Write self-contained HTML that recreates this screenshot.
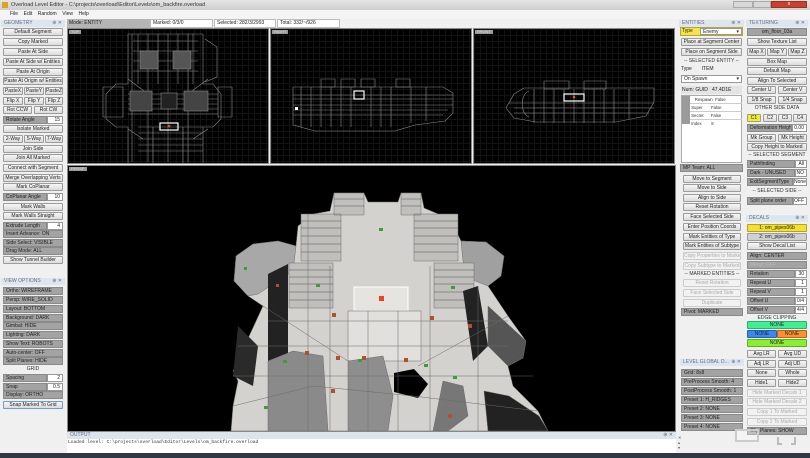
<!DOCTYPE html><html><head><style>
*{margin:0;padding:0;box-sizing:border-box}
body{width:810px;height:458px;overflow:hidden;background:#f0f0f0;font:5px/7px "Liberation Sans",sans-serif;color:#222;position:relative}
div{position:absolute}
.b{height:8px;background:linear-gradient(#f6f6f6,#dcdcdc);border:1px solid #9c9c9c;border-radius:1px;text-align:center;line-height:6px;white-space:nowrap;overflow:hidden}
.d{color:#aaa;background:#f2f2f2;border-color:#ccc}
.g{height:8px;background:#a3a3a3;border:1px solid #8a8a8a;padding-left:2px;line-height:6px;white-space:nowrap;overflow:hidden}
.i{height:8px;background:#fff;border:1px solid #999;text-align:right;padding-right:2px;line-height:6px}
.t{text-align:center;line-height:6px;color:#333}
.h{height:7px;background:#dde5ee;color:#61708a;padding-left:3px;line-height:7px}
.h span{position:absolute;right:3px;top:0}
.vp{background-color:#000;background-image:linear-gradient(#121212 1px,transparent 1px),linear-gradient(90deg,#121212 1px,transparent 1px);background-size:6px 6px;border:1px solid #888;overflow:hidden}
.lab{left:1px;top:1px;background:#9a9a9a;color:#ddd;font-size:4px;line-height:4px;padding:0 2px}
</style></head><body>
<div style="left:0;top:0;width:810px;height:10px;background:linear-gradient(#e4e4e4,#cfcfcf)"></div>
<div style="left:2px;top:2px;width:6px;height:6px;background:#e0a020"></div>
<div style="left:11px;top:1px;line-height:8px;font-size:5.5px;color:#333">Overload Level Editor - C:\projects\overload\Editor\Levels\om_backfire.overload</div>
<div style="left:733px;top:1px;width:20px;height:7px;background:#d8d8d8;border:1px solid #aaa"></div>
<div style="left:753px;top:1px;width:18px;height:7px;background:#d8d8d8;border:1px solid #aaa"></div>
<div style="left:771px;top:1px;width:36px;height:7px;background:#c84030;border:1px solid #a03020;color:#fff;text-align:center;line-height:5px">x</div>
<div style="left:0;top:10px;width:810px;height:9px;background:#f4f4f4"></div>
<div style="left:10px;top:11px;line-height:7px;font-size:5px">File&nbsp;&nbsp;&nbsp;&nbsp;Edit&nbsp;&nbsp;&nbsp;&nbsp;Random&nbsp;&nbsp;&nbsp;&nbsp;View&nbsp;&nbsp;&nbsp;&nbsp;Help</div>
<div style="left:67px;top:19px;width:83px;height:9px;background:#b4b4b4;padding-left:2px;line-height:9px">Mode: ENTITY</div>
<div style="left:150px;top:19px;width:63px;height:9px;background:#fff;border:1px solid #bbb;padding-left:2px;line-height:7px">Marked: 0/3/0</div>
<div style="left:214px;top:19px;width:62px;height:9px;background:#fff;border:1px solid #bbb;padding-left:2px;line-height:7px">Selected: 282/3/2993</div>
<div style="left:277px;top:19px;width:63px;height:9px;background:#fff;border:1px solid #bbb;padding-left:2px;line-height:7px">Total: 332/~/926</div>

<div class="h" style="left:1px;top:20px;width:64px">GEOMETRY<span>⊕ ✕</span></div>
<div class="b" style="left:3px;top:28px;width:60px">Default Segment</div>
<div class="b" style="left:3px;top:38px;width:60px">Copy Marked</div>
<div class="b" style="left:3px;top:48px;width:60px">Paste At Side</div>
<div class="b" style="left:3px;top:58px;width:60px">Paste At Side w/ Entities</div>
<div class="b" style="left:3px;top:68px;width:60px">Paste At Origin</div>
<div class="b" style="left:3px;top:77px;width:60px">Paste At Origin w/ Entities</div>
<div class="b" style="left:3px;top:87px;width:20px">PasteX</div><div class="b" style="left:24px;top:87px;width:20px">PasteY</div><div class="b" style="left:45px;top:87px;width:18px">PasteZ</div>
<div class="b" style="left:3px;top:97px;width:20px">Flip X</div><div class="b" style="left:24px;top:97px;width:20px">Flip Y</div><div class="b" style="left:45px;top:97px;width:18px">Flip Z</div>
<div class="b" style="left:3px;top:106px;width:29px">Rot CCW</div><div class="b" style="left:34px;top:106px;width:29px">Rot CW</div>
<div class="g" style="left:3px;top:116px;width:44px">Rotate Angle</div><div class="i" style="left:47px;top:116px;width:16px">15</div>
<div class="b" style="left:3px;top:125px;width:60px">Isolate Marked</div>
<div class="b" style="left:3px;top:135px;width:20px">2-Way</div><div class="b" style="left:24px;top:135px;width:20px">5-Way</div><div class="b" style="left:45px;top:135px;width:18px">7-Way</div>
<div class="b" style="left:3px;top:145px;width:60px">Join Side</div>
<div class="b" style="left:3px;top:154px;width:60px">Join All Marked</div>
<div class="b" style="left:3px;top:164px;width:60px">Connect with Segment</div>
<div class="b" style="left:3px;top:174px;width:60px">Merge Overlapping Verts</div>
<div class="b" style="left:3px;top:183px;width:60px">Mark CoPlanar</div>
<div class="g" style="left:3px;top:193px;width:44px">CoPlanar Angle</div><div class="i" style="left:47px;top:193px;width:16px">10</div>
<div class="b" style="left:3px;top:203px;width:60px">Mark Walls</div>
<div class="b" style="left:3px;top:212px;width:60px">Mark Walls Straight</div>
<div class="g" style="left:3px;top:222px;width:44px">Extrude Length</div><div class="i" style="left:47px;top:222px;width:16px">4</div>
<div class="g" style="left:3px;top:230px;width:60px">Insert Advance: ON</div>
<div class="g" style="left:3px;top:239px;width:60px">Side Select: VISIBLE</div>
<div class="g" style="left:3px;top:247px;width:60px">Drag Mode: ALL</div>
<div class="b" style="left:3px;top:256px;width:60px">Show Tunnel Builder</div>
<div class="h" style="left:1px;top:278px;width:64px">VIEW OPTIONS<span>⊕ ✕</span></div>
<div class="g" style="left:3px;top:287px;width:60px">Ortho: WIREFRAME</div>
<div class="g" style="left:3px;top:296px;width:60px">Persp: WIRE_SOLID</div>
<div class="g" style="left:3px;top:305px;width:60px">Layout: BOTTOM</div>
<div class="g" style="left:3px;top:314px;width:60px">Background: DARK</div>
<div class="g" style="left:3px;top:322px;width:60px">Gimbal: HIDE</div>
<div class="g" style="left:3px;top:331px;width:60px">Lighting: DARK</div>
<div class="g" style="left:3px;top:340px;width:60px">Show Text: ROBOTS</div>
<div class="g" style="left:3px;top:349px;width:60px">Auto-center: OFF</div>
<div class="g" style="left:3px;top:357px;width:60px">Split Planes: HIDE</div>
<div class="t" style="left:3px;top:366px;width:60px">GRID</div>
<div class="g" style="left:3px;top:374px;width:44px">Spacing</div><div class="i" style="left:47px;top:374px;width:16px">2</div>
<div class="g" style="left:3px;top:383px;width:44px">Snap</div><div class="i" style="left:47px;top:383px;width:16px">0.5</div>
<div class="g" style="left:3px;top:391px;width:60px">Display: ORTHO</div>
<div class="b" style="left:3px;top:401px;width:60px;border-color:#6aa0d0">Snap Marked To Grid</div>

<div class="vp" style="left:67px;top:28px;width:202px;height:136px">
<div class="lab">TOP</div>
<svg width="202" height="136" style="position:absolute;left:0;top:0" fill="none" stroke="#8a8a8a" stroke-width="0.6">
<path d="M60 5h75v50h10l8 10v25l-8 8h-10v40H60v-40H48l-10-8v-25l10-10h12z"/>
<path d="M35 58h20v30H35zM150 58h14v30h-14zM65 12h65M65 22h65M65 32h65M65 42h65M70 5v50M90 5v50M110 5v50M125 5v50M60 65h90M60 70h90M60 75h90M60 80h90M60 85h90M70 98h65M70 104h65M70 110h65M70 116h65M70 122h65M85 98v36M115 98v36M137 10l12 8v30l-12 5M64 5v128M80 5v128M100 5v128M120 5v128M60 50l20 15M140 50l-20 15M60 100l15 10M140 100l-15 10"/>
<rect x="72" y="22" width="18" height="18" fill="#555"/><rect x="105" y="22" width="18" height="18" fill="#555"/>
<rect x="62" y="62" width="22" height="20" fill="#444"/><rect x="116" y="62" width="24" height="20" fill="#444"/>
<rect x="93" y="64" width="16" height="16" fill="#222"/>
<rect x="92" y="94" width="18" height="7" stroke="#fff" stroke-width="1.2"/>
<circle cx="101" cy="97" r="1.3" fill="#f05030" stroke="none"/>
</svg></div>
<div class="vp" style="left:270px;top:28px;width:202px;height:136px">
<div class="lab">RIGHT</div>
<svg width="202" height="136" style="position:absolute;left:0;top:0" fill="none" stroke="#8a8a8a" stroke-width="0.6">
<path d="M22 58h150l10 6v20l-8 8l-30 4l-20 6h-80l-22-6v-24z"/><path d="M50 50h14v8H50zM70 50h14v8H70zM90 50h14v8H90zM125 50h14v8h-14zM22 66h160M22 70h160M22 76h160M22 81h155M22 86h150M30 58v40M40 58v40M50 58v40M60 58v40M70 58v40M80 58v40M100 58v40M110 58v40M120 58v40M140 58v36M155 58v34"/>
<rect x="83" y="62" width="10" height="8" stroke="#fff" stroke-width="1.2"/><rect x="24" y="78" width="3" height="3" fill="#fff" stroke="none"/>
</svg></div>
<div class="vp" style="left:473px;top:28px;width:202px;height:136px">
<div class="lab">FRONT</div>
<svg width="202" height="136" style="position:absolute;left:0;top:0" fill="none" stroke="#8a8a8a" stroke-width="0.6">
<path d="M40 65l10-6h130v14l-8 14l-30 6h-80l-22-4l-8-10z"/><path d="M70 52h25v8H70zM110 52h22v8h-22zM35 74h145M40 79h140M40 84h135M60 60v34M70 60v34M80 60v34M90 60v34M100 60v34M110 60v34M120 60v34M130 60v34M140 60v34M155 60v30M55 62c-8 2-10 22 0 26"/>
<rect x="90" y="65" width="20" height="7" stroke="#fff" stroke-width="1.2"/><circle cx="100" cy="68" r="1.3" fill="#f05030" stroke="none"/>
</svg></div>

<div style="left:67px;top:165px;width:609px;height:267px;background:#000;border:1px solid #888;overflow:hidden">
<div class="lab">PERSP</div>
<svg width="609" height="267" style="position:absolute;left:0;top:0" stroke="#6a6a6a" stroke-width="0.5">
<path d="M266 27L296 27L300 36L330 36L333 27L353 27L356 42L375 50L385 58L393 75L418 76L436 90L433 110L420 120L440 150L458 175L455 192L440 200L445 220L470 245L480 265L163 265L165 240L170 215L165 205L195 140L180 130L166 115L168 90L185 78L210 75L228 80L230 60L245 48L262 45Z" fill="#d4d2ce"/>
<path d="M168 90L185 78L210 75L228 80L225 105L205 118L190 128L180 130L166 115Z" fill="#a8a8a8"/>
<path d="M393 75L418 76L436 90L433 110L420 120L400 112L395 95Z" fill="#a0a0a0"/>
<path d="M266 27h30v22h-30zM333 27h20v22h-20zM233 48h40v47h-40zM346 48h44v47h-44zM221 97h44v45h-44zM366 97h40v45h-40z" fill="#c0bfbc"/>
<path d="M233 55h40M233 62h40M233 70h40M233 78h40M233 86h40M346 55h44M346 62h44M346 70h44M346 78h44M346 86h44M221 104h44M221 111h44M221 118h44M221 126h44M221 134h44M366 104h40M366 111h40M366 118h40M366 126h40M366 134h40M266 33h30M266 40h30M333 33h20M333 40h20" stroke="#555"/>
<path d="M200 108l20-10v95l-20 10zM395 125l15 -5l10 60l-15 15z" fill="#222" stroke="none"/>
<path d="M420 140l38 35l-3 17l-15 8l-20-20z" fill="#555"/>
<rect x="286" y="121" width="54" height="24" fill="#e6e4e0" stroke="#fff" stroke-width="1"/>
<rect x="311" y="130" width="5" height="5" fill="#f04020" stroke="none"/>
<path d="M280 145h73v50h-73z" fill="#e2e0dc"/>
<path d="M200 195l25-10l30 5l5 75h-60z" fill="#8a8a8a"/>
<path d="M280 195l35-5l10 40l-5 35h-40z" fill="#8e8e8e"/>
<path d="M326 207l20-4l14 15l-10 14l-24-6z" fill="#000" stroke="none"/>
<path d="M416 225l25 5l30 20l9 15h-60z" fill="#222"/>
<path d="M375 215l20 5l5 30l-20 15h-15z" fill="#777"/>
<path d="M170 160l20 20l-5 40l-20-10z" fill="#2a2a2a" stroke="none"/>
<path d="M170 180h270M165 210h300M200 155h240M240 48v217M262 100v165M300 145v120M330 145v120M362 100v165M410 120v145M165 240l80-20l100 10l125 15M195 140l85 55M440 150l-90 50" fill="none"/>
<g fill="#3c9c3c" stroke="none"><rect x="248" y="118" width="4" height="3"/><rect x="311" y="62" width="4" height="3"/><rect x="215" y="194" width="4" height="3"/><rect x="290" y="193" width="4" height="3"/><rect x="383" y="120" width="4" height="3"/><rect x="385" y="210" width="4" height="3"/><rect x="196" y="240" width="4" height="3"/><rect x="176" y="101" width="3" height="3"/><rect x="356" y="198" width="4" height="3"/></g>
<g fill="#b05030" stroke="none"><rect x="237" y="185" width="4" height="4"/><rect x="268" y="190" width="4" height="4"/><rect x="294" y="190" width="4" height="4"/><rect x="336" y="192" width="4" height="4"/><rect x="263" y="223" width="4" height="4"/><rect x="380" y="248" width="4" height="4"/><rect x="362" y="150" width="4" height="4"/><rect x="264" y="147" width="4" height="4"/><rect x="400" y="158" width="4" height="4"/><rect x="208" y="118" width="3" height="3"/></g>
</svg></div>
<div class="h" style="left:67px;top:432px;width:609px;background:#dce4ec">OUTPUT<span>⊕ ✕</span></div>
<div style="left:67px;top:439px;width:609px;height:14px;background:#fff"></div>
<div style="left:68px;top:440px;font:4.6px/6px 'Liberation Mono',monospace;color:#333">Loaded level: C:\projects\overload\Editor\Levels\om_backfire.overload</div>
<div style="left:0;top:453px;width:810px;height:5px;background:#2e3944"></div>

<div class="h" style="left:679px;top:20px;width:65px">ENTITIES<span>⊕ ✕</span></div>
<div style="left:680px;top:27px;width:63px;height:9px;background:#f4e44a;border:1px solid #b8a830"></div>
<div style="left:682px;top:28px;line-height:7px">Type</div>
<div class="i" style="left:700px;top:28px;width:42px;height:7px;text-align:left;padding-left:2px">Enemy<span style="position:absolute;right:2px">▾</span></div>
<div class="b" style="left:681px;top:38px;width:61px">Place at Segment Center</div>
<div class="b" style="left:681px;top:48px;width:61px">Place on Segment Side</div>
<div class="t" style="left:681px;top:58px;width:61px">-- SELECTED ENTITY --</div>
<div style="left:681px;top:66px;line-height:7px">Type&nbsp;&nbsp;&nbsp;&nbsp;&nbsp;&nbsp;&nbsp;ITEM</div>
<div class="i" style="left:681px;top:75px;width:61px;text-align:left;padding-left:2px">On Spawn<span style="position:absolute;right:2px">▾</span></div>
<div style="left:681px;top:86px;width:61px;height:8px;background:#e4e4e4;line-height:8px;padding-left:1px">Num: GUID&nbsp;&nbsp;&nbsp;47.4D1E</div>
<div style="left:681px;top:95px;width:61px;height:68px;background:#fff;border:1px solid #aaa"></div>
<div style="left:682px;top:96px;width:8px;height:28px;background:#9a9a9a"></div>
<div style="left:690px;top:96px;width:52px;font-size:4.3px;line-height:7px;color:#333"><div style="position:static;border-bottom:1px solid #ccc">&nbsp;&nbsp;&nbsp;&nbsp;Respawn&nbsp;&nbsp;False</div><div style="position:static;border-bottom:1px solid #ccc">&nbsp;Super&nbsp;&nbsp;&nbsp;&nbsp;&nbsp;&nbsp;&nbsp;False</div><div style="position:static;border-bottom:1px solid #ccc">&nbsp;Secret&nbsp;&nbsp;&nbsp;&nbsp;&nbsp;&nbsp;False</div><div style="position:static">&nbsp;Index&nbsp;&nbsp;&nbsp;&nbsp;&nbsp;&nbsp;&nbsp;&nbsp;8</div></div>
<div class="g" style="left:680px;top:164px;width:63px">MP Team: ALL</div>
<div class="b" style="left:683px;top:175px;width:58px">Move to Segment</div>
<div class="b" style="left:683px;top:184px;width:58px">Move to Side</div>
<div class="b" style="left:683px;top:194px;width:58px">Align to Side</div>
<div class="b" style="left:683px;top:203px;width:58px">Reset Rotation</div>
<div class="b" style="left:683px;top:213px;width:58px">Face Selected Side</div>
<div class="b" style="left:683px;top:223px;width:58px">Enter Position Coords</div>
<div class="b" style="left:683px;top:233px;width:58px">Mark Entities of Type</div>
<div class="b" style="left:683px;top:242px;width:58px">Mark Entities of Subtype</div>
<div class="b d" style="left:683px;top:252px;width:58px">Copy Properties to Marked</div>
<div class="b d" style="left:683px;top:262px;width:58px">Copy Subtype to Marked</div>
<div class="t" style="left:683px;top:271px;width:58px">-- MARKED ENTITIES --</div>
<div class="b d" style="left:683px;top:279px;width:58px">Reset Rotation</div>
<div class="b d" style="left:683px;top:289px;width:58px">Face Selected Side</div>
<div class="b d" style="left:683px;top:299px;width:58px">Duplicate</div>
<div class="g" style="left:681px;top:308px;width:62px">Pivot: MARKED</div>
<div class="h" style="left:680px;top:359px;width:64px">LEVEL GLOBAL D...<span>⊕ ✕</span></div>
<div class="g" style="left:681px;top:369px;width:62px">Grid: 8x8</div>
<div class="g" style="left:681px;top:378px;width:62px">PreProcess Smooth: 4</div>
<div class="g" style="left:681px;top:387px;width:62px">PostProcess Smooth: 1</div>
<div class="g" style="left:681px;top:396px;width:62px">Preset 1: H_RIDGES</div>
<div class="g" style="left:681px;top:405px;width:62px">Preset 2: NONE</div>
<div class="g" style="left:681px;top:414px;width:62px">Preset 3: NONE</div>
<div class="g" style="left:681px;top:423px;width:62px">Preset 4: NONE</div>
<div style="left:678px;top:435px;font-size:4px;line-height:5px;color:#555">✕<br>▴<br>▾</div>

<div class="h" style="left:746px;top:20px;width:62px">TEXTURING<span>⊕ ✕</span></div>
<div class="g" style="left:747px;top:28px;width:60px;text-align:center;padding:0">om_floor_03a</div>
<div class="b" style="left:747px;top:38px;width:60px">Show Texture List</div>
<div class="b" style="left:747px;top:48px;width:19px">Map X</div><div class="b" style="left:767px;top:48px;width:20px">Map Y</div><div class="b" style="left:788px;top:48px;width:19px">Map Z</div>
<div class="b" style="left:747px;top:58px;width:60px">Box Map</div>
<div class="b" style="left:747px;top:67px;width:60px">Default Map</div>
<div class="b" style="left:747px;top:77px;width:60px">Align To Selected</div>
<div class="b" style="left:747px;top:86px;width:29px">Center U</div><div class="b" style="left:778px;top:86px;width:29px">Center V</div>
<div class="b" style="left:747px;top:96px;width:29px">1/8 Snap</div><div class="b" style="left:778px;top:96px;width:29px">1/4 Snap</div>
<div class="t" style="left:747px;top:105px;width:60px">OTHER SIDE DATA</div>
<div class="b" style="left:747px;top:114px;width:14px;background:#f0f020">C1</div><div class="b" style="left:763px;top:114px;width:14px">C2</div><div class="b" style="left:778px;top:114px;width:14px">C3</div><div class="b" style="left:793px;top:114px;width:14px">C4</div>
<div class="g" style="left:747px;top:124px;width:45px">Deformation Height</div><div class="i" style="left:792px;top:124px;width:15px">0.00</div>
<div class="b" style="left:747px;top:134px;width:29px">Mk Group</div><div class="b" style="left:778px;top:134px;width:29px">Mk Height</div>
<div class="b" style="left:747px;top:143px;width:60px">Copy Height to Marked</div>
<div class="t" style="left:747px;top:152px;width:60px">-- SELECTED SEGMENT --</div>
<div class="g" style="left:747px;top:160px;width:48px">Pathfinding</div><div class="i" style="left:795px;top:160px;width:12px">All</div>
<div class="g" style="left:747px;top:169px;width:48px">Dark - UNUSED</div><div class="i" style="left:795px;top:169px;width:12px">NO</div>
<div class="g" style="left:747px;top:178px;width:46px">ExitSegmentType</div><div class="i" style="left:793px;top:178px;width:14px">None</div>
<div class="t" style="left:747px;top:188px;width:60px">-- SELECTED SIDE --</div>
<div class="g" style="left:747px;top:197px;width:46px">Split plane order</div><div class="i" style="left:793px;top:197px;width:14px">OFF</div>
<div class="h" style="left:746px;top:215px;width:62px">DECALS<span>⊕ ✕</span></div>
<div class="b" style="left:747px;top:224px;width:60px;background:#f4e030;border-color:#b8a020">1: om_pipes06b</div>
<div class="b" style="left:747px;top:233px;width:60px;background:#d0d0d0">2: om_pipes06b</div>
<div class="b" style="left:747px;top:242px;width:60px">Show Decal List</div>
<div class="g" style="left:747px;top:252px;width:60px">Align: CENTER</div>
<div class="g" style="left:747px;top:261px;width:60px;color:#bbb">Mirror: OFF</div>
<div class="g" style="left:747px;top:270px;width:48px">Rotation</div><div class="i" style="left:795px;top:270px;width:12px">30</div>
<div class="g" style="left:747px;top:279px;width:48px">Repeat U</div><div class="i" style="left:795px;top:279px;width:12px">1</div>
<div class="g" style="left:747px;top:288px;width:48px">Repeat V</div><div class="i" style="left:795px;top:288px;width:12px">1</div>
<div class="g" style="left:747px;top:297px;width:48px">Offset U</div><div class="i" style="left:795px;top:297px;width:12px">0/4</div>
<div class="g" style="left:747px;top:306px;width:48px">Offset V</div><div class="i" style="left:795px;top:306px;width:12px">4/4</div>
<div class="t" style="left:747px;top:315px;width:60px">EDGE CLIPPING</div>
<div class="b" style="left:747px;top:321px;width:60px;background:#40f090;border-color:#30b070">NONE</div>
<div class="b" style="left:747px;top:330px;width:30px;background:#3a88f0;border-color:#2a60b0">NONE</div><div class="b" style="left:777px;top:330px;width:30px;background:#ff9030;border-color:#c06020">NONE</div>
<div class="b" style="left:747px;top:339px;width:60px;background:#88f030;border-color:#60b020">NONE</div>
<div class="b" style="left:747px;top:350px;width:29px">Avg LR</div><div class="b" style="left:778px;top:350px;width:29px">Avg UD</div>
<div class="b" style="left:747px;top:360px;width:29px">Adj LR</div><div class="b" style="left:778px;top:360px;width:29px">Adj UD</div>
<div class="b" style="left:747px;top:369px;width:29px">None</div><div class="b" style="left:778px;top:369px;width:29px">Whole</div>
<div class="b" style="left:747px;top:379px;width:29px">Hide1</div><div class="b" style="left:778px;top:379px;width:29px">Hide2</div>
<div class="b d" style="left:747px;top:389px;width:60px">Hide Marked Decals 1</div>
<div class="b d" style="left:747px;top:398px;width:60px">Hide Marked Decals 2</div>
<div class="b d" style="left:747px;top:408px;width:60px">Copy 1 To Marked</div>
<div class="b d" style="left:747px;top:418px;width:60px">Copy 2 To Marked</div>
<div class="g" style="left:747px;top:427px;width:60px">Clip Planes: SHOW</div>
<div style="left:735px;top:429px;width:24px;height:13px;border:2px solid #ccc;background:rgba(255,255,255,.3)"></div>
<div style="left:777px;top:437px;width:5px;height:8px;border-left:2px solid #bbb;border-bottom:2px solid #bbb"></div>
<div style="left:791px;top:437px;width:5px;height:8px;border-right:2px solid #bbb;border-bottom:2px solid #bbb"></div>
</body></html>
